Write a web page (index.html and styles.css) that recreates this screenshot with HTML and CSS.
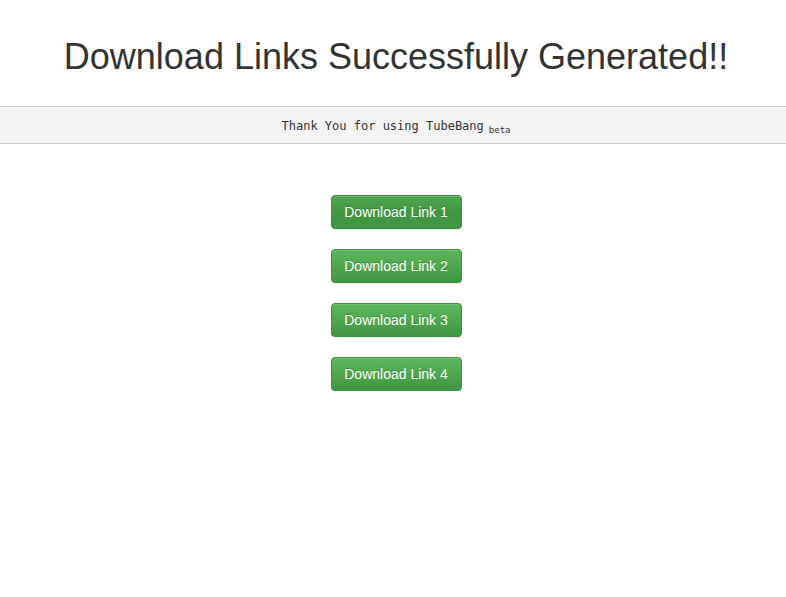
FILE: index.html
```html
<!DOCTYPE html>
<html>
<head>
<meta charset="utf-8">
<link rel="stylesheet" href="styles.css">
</head>
<body>
<h1 class="title">Download Links Successfully Generated!!</h1>
<div class="band">Thank You for using TubeBang<sub class="beta">beta</sub></div>
<div class="links">
  <a class="btn btn-active" href="#">Download Link 1</a>
  <a class="btn" href="#">Download Link 2</a>
  <a class="btn" href="#">Download Link 3</a>
  <a class="btn" href="#">Download Link 4</a>
</div>
</body>
</html>
```
FILE: styles.css
```css
html, body {
  margin: 0;
  padding: 0;
  background: #fff;
  font-family: "Liberation Sans", Arial, sans-serif;
  color: #333;
}
.title {
  margin: 0;
  padding: 37px 0 0 6px;
  height: 69px;
  font-size: 36px;
  font-weight: 400;
  line-height: 40px;
  text-align: center;
  color: #333;
}
.band {
  background: #f4f4f4;
  border-top: 1px solid #cfcfcf;
  border-bottom: 1px solid #cfcfcf;
  height: 36px;
  padding-left: 6px;
  line-height: 38px;
  text-align: center;
  font-family: "DejaVu Sans Mono", monospace;
  font-size: 12px;
  color: #333;
}
.beta {
  margin-left: 5px;
  font-size: 9px;
  vertical-align: -3px;
  line-height: 0;
}
.links {
  display: flex;
  flex-direction: column;
  align-items: center;
  gap: 20px;
  padding: 51px 0 0 6px;
}
.btn {
  display: block;
  box-sizing: border-box;
  width: 131px;
  height: 34px;
  padding: 6px 12px;
  font-size: 14px;
  line-height: 20px;
  text-align: center;
  color: #fff;
  text-decoration: none;
  text-shadow: 0 -1px 0 rgba(0,0,0,.2);
  border: 1px solid #3e8f3e;
  border-radius: 4px;
  background-color: #419641;
  background-image: linear-gradient(to bottom, #5cb85c 0, #419641 100%);
  box-shadow: inset 0 1px 0 rgba(255,255,255,.15), 0 1px 1px rgba(0,0,0,.075);
}
.btn-active {
  background-image: linear-gradient(to bottom, #4fa84f 0, #419641 17px, #419641 100%);
}
```
